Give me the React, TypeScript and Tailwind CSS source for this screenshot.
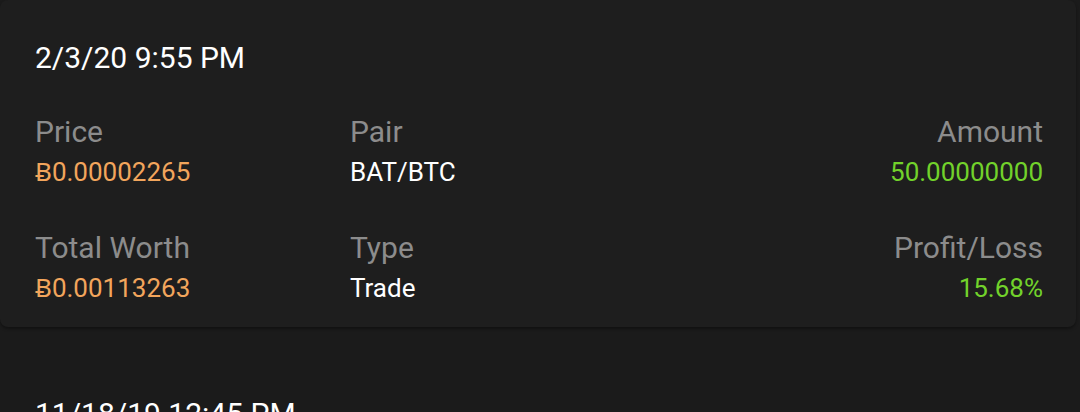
type Trade = {
  date: string
  price: string
  pair: string
  amount: string
  total: string
  type: string
  profit: string
}

const trades: Trade[] = [
  {
    date: '2/3/20 9:55 PM',
    price: 'Ƀ0.00002265',
    pair: 'BAT/BTC',
    amount: '50.00000000',
    total: 'Ƀ0.00113263',
    type: 'Trade',
    profit: '15.68%',
  },
  {
    date: '11/18/19 12:45 PM',
    price: 'Ƀ0.00001958',
    pair: 'BAT/BTC',
    amount: '50.00000000',
    total: 'Ƀ0.00097900',
    type: 'Trade',
    profit: '0.00%',
  },
]

function Field({ label, value, valueClass, right }: { label: string; value: string; valueClass: string; right?: boolean }) {
  return (
    <div className={right ? 'text-right' : ''}>
      <p className="text-[30px] leading-[36px] text-[#8c8c8c]">{label}</p>
      <p className={`mt-[6px] text-[26px] leading-[32px] ${valueClass}`}>{value}</p>
    </div>
  )
}

function TradeCard({ trade, flat }: { trade: Trade; flat?: boolean }) {
  return (
    <div
      className={
        flat
          ? 'mr-[4px] rounded-lg pl-[35px] pr-[33px] pt-[40px] pb-[23px]'
          : 'mr-[4px] rounded-lg bg-[#1e1e1e] pl-[35px] pr-[33px] pt-[40px] pb-[23px] shadow-[0_2px_3px_rgba(0,0,0,0.35)]'
      }
    >
      <h2 className="text-[30px] leading-[36px] text-white">{trade.date}</h2>
      <div className="mt-[38px] grid grid-cols-[315px_1fr_auto] gap-y-[42px]">
        <Field label="Price" value={trade.price} valueClass="text-[#f2a55c]" />
        <Field label="Pair" value={trade.pair} valueClass="text-white" />
        <Field label="Amount" value={trade.amount} valueClass="text-[#72d22b]" right />
        <Field label="Total Worth" value={trade.total} valueClass="text-[#f2a55c]" />
        <Field label="Type" value={trade.type} valueClass="text-white" />
        <Field label="Profit/Loss" value={trade.profit} valueClass="text-[#72d22b]" right />
      </div>
    </div>
  )
}

export default function App() {
  return (
    <div className="h-[412px] overflow-hidden bg-[#1b1b1b]" style={{ fontFamily: 'Roboto, "Noto Sans", sans-serif' }}>
      <div className="space-y-[29px]">
        {trades.map((t, i) => (
          <TradeCard key={t.date} trade={t} flat={i > 0} />
        ))}
      </div>
    </div>
  )
}
